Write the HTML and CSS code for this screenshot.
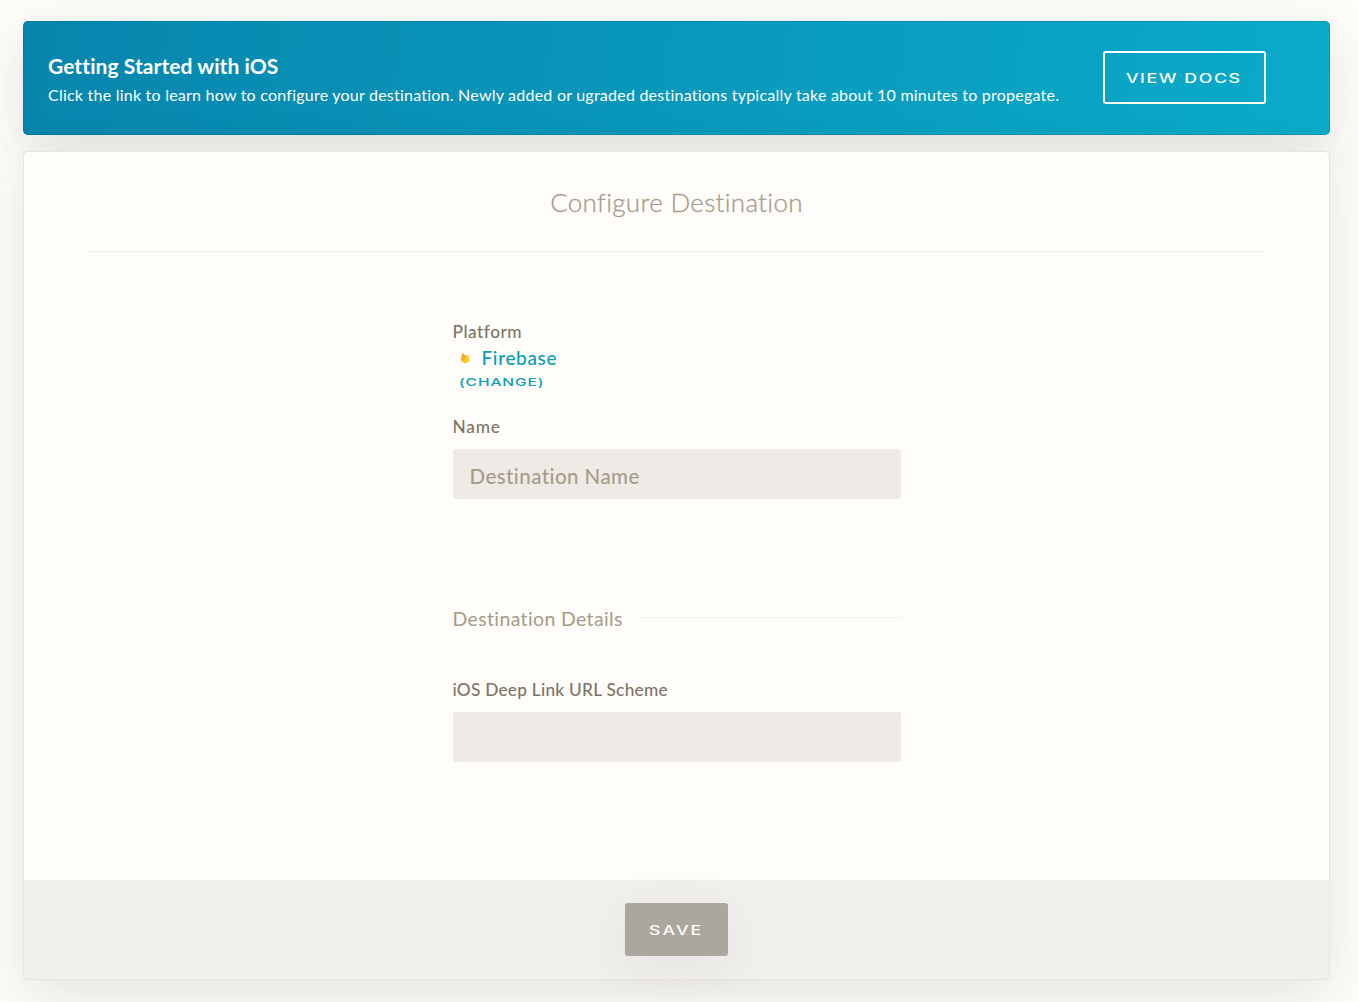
FILE: index.html
```html
<!DOCTYPE html>
<html lang="en">
<head>
<meta charset="utf-8">
<title>Configure Destination</title>
<link rel="stylesheet" href="styles.css">
</head>
<body>
<main class="page">
  <section class="banner">
    <div class="banner-text">
      <h2 class="banner-title">Getting Started with iOS</h2>
      <p class="banner-copy">Click the link to learn how to configure your destination. Newly added or ugraded destinations typically take about 10 minutes to propegate.</p>
    </div>
    <a class="docs-button"><span class="wide">VIEW DOCS</span></a>
  </section>
  <form class="panel">
    <header class="panel-header"><h1 class="panel-title">Configure Destination</h1></header>
    <div class="fields">
      <div class="label label-platform">Platform</div>
      <div class="platform">
        <svg class="flame" viewBox="0 0 10 12" width="10" height="12">
          <path d="M1 8.8 2.3.8 4 3 5.2 2.4 9 9 5.2 11.4Z" fill="#ffa726"/>
          <path d="M1 8.8 7.6 2.8Q8.4 2.4 8.6 3.4L9.4 9 5.8 11.2Q5.2 11.5 4.6 11.2Z" fill="#ffca28"/>
          <path d="M1 8.8 2.3.8 6.2 5.4 3.5 8Z" fill="#fba62e"/>
        </svg>
        <span class="platform-name">Firebase</span>
      </div>
      <a class="change"><span class="wide">(CHANGE)</span></a>
      <label class="label label-name" for="name">Name</label>
      <input class="input" id="name" placeholder="Destination Name">
      <div class="divider"><h3 class="divider-title">Destination Details</h3><span class="rule"></span></div>
      <label class="label label-scheme" for="scheme">iOS Deep Link URL Scheme</label>
      <input class="input" id="scheme">
    </div>
    <footer class="panel-footer"><button class="save" type="button"><span class="wide">SAVE</span></button></footer>
  </form>
</main>
</body>
</html>
```
FILE: styles.css
```css
* { box-sizing: border-box; }
body {
  margin: 0;
  height: 1002px;
  overflow: hidden;
  background: #fefdf9;
  font-family: Lato, "Open Sans", sans-serif;
  font-variant-ligatures: none;
}
h1, h2, h3, p { margin: 0; font-weight: 400; white-space: nowrap; }
.page { display: flex; flex-direction: column; gap: 16px; padding: 21px 28px 22px 23px; }
.wide { display: inline-block; font-family: Inter, sans-serif; transform: scaleX(1.42); white-space: nowrap; }
.banner {
  display: flex;
  align-items: flex-start;
  justify-content: space-between;
  height: 114px;
  padding: 30px 64px 0 25px;
  border-radius: 5px;
  background: linear-gradient(100deg, #0785ad, #0aabc9);
  box-shadow: inset 0 0 0 1px rgba(0, 70, 90, .2), 0 15px 55px rgba(50, 45, 40, .13);
  color: #fff;
}
.banner-title { font-size: 21px; line-height: 29px; font-weight: 700; letter-spacing: .07px; }
.banner-copy { font-size: 16px; line-height: 30px; letter-spacing: .23px; }
.docs-button {
  display: flex;
  align-items: center;
  justify-content: center;
  width: 163px;
  height: 53px;
  padding: 2px 2px 0 0;
  border: 2px solid #fff;
  border-radius: 3px;
  font-size: 12.5px;
  letter-spacing: 1.1px;
  font-weight: 500;
}
.panel {
  display: flex;
  flex-direction: column;
  height: 829px;
  border: 1px solid #e7e5e1;
  border-radius: 5px;
  background: #fefdf9;
  box-shadow: 0 15px 55px rgba(50, 45, 40, .12);
}
.panel-header { height: 100px; margin: 0 64px; border-bottom: 1px solid #f2f1ed; text-align: center; }
.panel-title { padding-top: 30px; font-size: 26px; line-height: 40px; font-weight: 300; color: #a69b8a; letter-spacing: .3px; -webkit-text-stroke: .3px #a69b8a; }
.fields { display: flex; flex-direction: column; flex: 1; width: 448px; margin: 0 auto; padding-top: 68px; }
.label { font-size: 17.3px; line-height: 24px; font-weight: 500; color: #7d7467; letter-spacing: .25px; }
.label-platform { letter-spacing: .5px; }
.platform { display: flex; align-items: center; gap: 12px; height: 27px; padding-left: 7px; }
.platform-name { font-size: 19px; font-weight: 500; color: #0b9db3; letter-spacing: .65px; }
.change { height: 20px; margin-top: 1px; padding-left: 6px; line-height: 20px; font-size: 11px; font-weight: 500; letter-spacing: .6px; color: #0b9db3; }
.change .wide { transform-origin: left center; }
.label-name { margin: 23px 0 10px; letter-spacing: .8px; }
.input {
  width: 448px;
  height: 50px;
  flex-shrink: 0;
  padding: 3px 17px 0;
  border: 0;
  border-radius: 3px;
  background: #eeebe6;
  font: 500 20.5px Lato, sans-serif;
  font-variant-ligatures: none;
  letter-spacing: .43px;
  color: #7d7467;
}
.input::placeholder { color: #a69b8a; opacity: 1; }
.divider { display: flex; align-items: center; gap: 17px; height: 30px; margin-top: 105px; }
.divider-title { position: relative; top: -1px; font-size: 19.5px; color: #a69b8a; letter-spacing: .36px; }
.rule { flex: 1; height: 1px; margin-bottom: 4px; background: #f0efea; }
.label-scheme { margin: 44px 0 10px; }
.panel-footer { display: flex; justify-content: center; height: 99px; padding-top: 23px; border-radius: 0 0 4px 4px; background: #f1f0ed; }
.save {
  width: 103px;
  height: 53px;
  padding: 2px 0 0;
  border: 0;
  border-radius: 3px;
  background: #aba69e;
  box-shadow: 0 12px 60px rgba(50, 45, 40, .07);
  color: #fefdf9;
  font-size: 12.5px;
  font-weight: 500;
  letter-spacing: 1.5px;
}
```
